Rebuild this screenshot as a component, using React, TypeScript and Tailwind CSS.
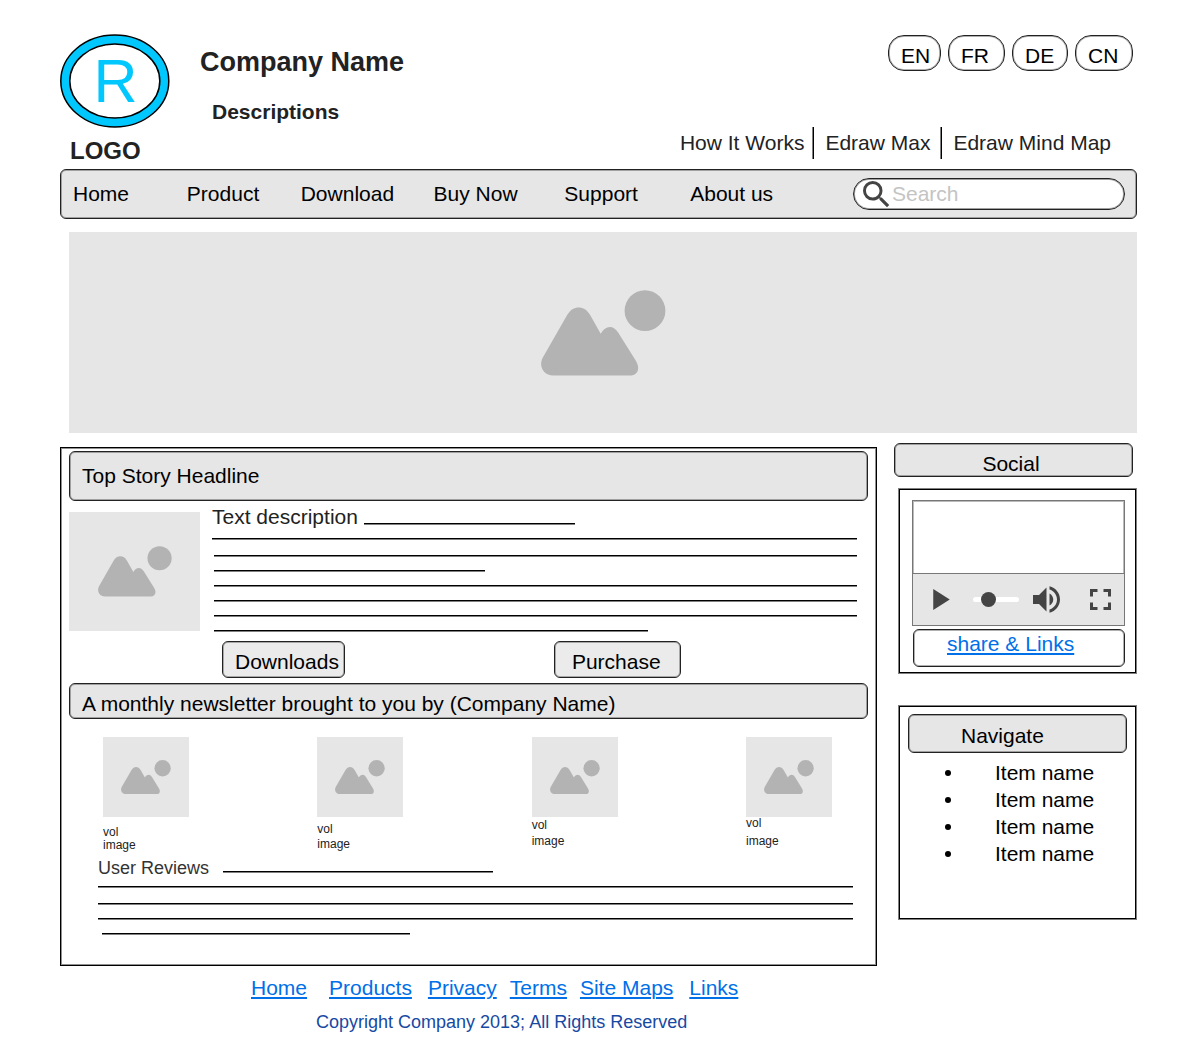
import React from "react";

const bar =
  "rounded-md border border-[#222] bg-[#e6e6e6] shadow-[inset_0_0_0_1px_#a0a0a0] text-black";
const link = "text-[#0070e8] underline decoration-2 underline-offset-2";

function Line({ className = "" }: { className?: string }) {
  return <div className={`h-0.5 border-t border-b border-t-black border-b-[#808080] ${className}`} />;
}

function Mountains({ className = "" }: { className?: string }) {
  return (
    <svg viewBox="0 0 125 86" className={className} fill="#b3b3b3" aria-hidden="true">
      <path d="M1.7 67.8 L26.3 24.8 C32 15 43.5 15 49 24.8 L59.7 43.8 C64.5 35 72.5 35 77.3 42.8 L94.7 70.5 C100 79 96 85.5 89 85.5 L12.3 85.5 C2 85.5 -2.5 76 1.7 67.8 Z" />
      <circle cx="104" cy="20.7" r="20.4" />
    </svg>
  );
}

function Placeholder({ className, icon }: { className: string; icon: string }) {
  return (
    <div role="img" aria-label="Image placeholder" className={`flex items-center justify-center bg-[#e6e6e6] ${className}`}>
      <Mountains className={icon} />
    </div>
  );
}

const languages = [
  { code: "EN", width: "w-[53px]" },
  { code: "FR", width: "w-[57px]" },
  { code: "DE", width: "w-[56px]" },
  { code: "CN", width: "w-[58px]" },
];

const menu = ["Home", "Product", "Download", "Buy Now", "Support", "About us"];

const captions = [
  "mt-[9px] leading-[13px]",
  "mt-[5px] leading-[15px]",
  "leading-[16px]",
  "-mt-[3px] leading-[18px]",
];

const footerLinks = [
  { name: "Home", gap: "mr-[22px]" },
  { name: "Products", gap: "mr-4" },
  { name: "Privacy", gap: "mr-[13px]" },
  { name: "Terms", gap: "mr-[13px]" },
  { name: "Site Maps", gap: "mr-4" },
  { name: "Links", gap: "" },
];

function Header() {
  return (
    <header className="flex justify-between text-[#222]">
      <div className="flex">
        <div className="w-[110px]">
          <svg viewBox="0 0 110 94" className="h-[94px] w-[110px]" role="img" aria-label="Logo">
            <ellipse cx="54.8" cy="47" rx="54" ry="46" fill="#00c8ff" stroke="#000" strokeWidth="1.5" />
            <ellipse cx="54.8" cy="47" rx="45" ry="37" fill="#fff" stroke="#000" strokeWidth="1.5" />
            <text x="55.5" y="68" textAnchor="middle" fontSize="61" fill="#00c8ff">R</text>
          </svg>
          <p className="mt-[7px] mb-0.5 pl-2.5 text-[24px] leading-8 font-bold">LOGO</p>
        </div>
        <div className="ml-[30px] pt-3">
          <h1 className="text-[27px] leading-8 font-bold">Company Name</h1>
          <p className="mt-[22px] ml-3 leading-6 font-bold">Descriptions</p>
        </div>
      </div>
      <div className="flex flex-col items-end justify-between pt-px pb-2.5">
        <div className="flex gap-[7px] pr-1">
          {languages.map((l) => (
            <button
              key={l.code}
              className={`rounded-2xl border border-[#222] pt-2 pb-0.5 pl-3 text-left leading-6 text-black shadow-[inset_0_0_0_1px_#b0b0b0] ${l.width}`}
            >
              {l.code}
            </button>
          ))}
        </div>
        <nav className="flex pr-[26px] leading-8">
          <a href="#how" className="pr-[9px]">How It Works</a>
          <a href="#max" className="border-l border-black px-[11px] shadow-[-1px_0_0_#808080]">Edraw Max</a>
          <a href="#mind" className="border-l border-black pl-[11px] shadow-[-1px_0_0_#808080]">Edraw Mind Map</a>
        </nav>
      </div>
    </header>
  );
}

function MenuBar() {
  return (
    <div className={`flex items-center py-2 pr-[11px] pl-3 ${bar}`}>
      <nav className="grid flex-1 grid-cols-[114fr_114fr_133fr_131fr_126fr_163fr]">
        {menu.map((m) => (
          <a key={m} href="#menu" className="leading-6 whitespace-nowrap">{m}</a>
        ))}
      </nav>
      <label className="flex h-8 w-[272px] items-center rounded-full border border-[#222] bg-white pl-[9px] shadow-[inset_0_0_0_1px_#a0a0a0]">
        <svg viewBox="3 3 18 18" className="size-[27px] shrink-0" fill="#444" aria-hidden="true">
          <path d="M15.5 14h-.79l-.28-.27A6.471 6.471 0 0 0 16 9.500 6.500 6.500 0 1 0 9.500 16c1.610 0 3.090-.59 4.230-1.570l.27.28v.79l5 4.990L20.490 19l-4.990-5zm-6 0C7.010 14 5 11.990 5 9.500S7.010 5 9.500 5 14 7.010 14 9.500 11.990 14 9.500 14z" />
        </svg>
        <input
          type="search"
          aria-label="Search"
          placeholder="Search"
          className="ml-0.5 min-w-0 flex-1 bg-transparent leading-6 outline-none placeholder:text-[#c4c4c4]"
        />
      </label>
    </div>
  );
}

function Story() {
  return (
    <main className="mt-1 border border-black px-2 pt-[3px] pb-[30px] shadow-[inset_0_0_0_1px_#909090]">
      <h2 className={`py-3 pl-3 leading-6 ${bar}`}>Top Story Headline</h2>
      <section className="flex items-start">
        <Placeholder className="mt-[11px] h-[119px] w-[131px] shrink-0" icon="w-[74px]" />
        <div className="mt-1 min-w-0 flex-1 pr-[11px] pl-3">
          <div className="flex items-end leading-6 text-[#222]">
            <span>Text description</span>
            <Line className="mb-1 ml-1.5 w-[211px]" />
          </div>
          <Line className="mt-[9px]" />
          <div className="mt-[15px] ml-0.5 flex flex-col gap-[13px]">
            <Line />
            <Line className="w-[271px]" />
            <Line />
            <Line />
            <Line />
            <Line className="w-[434px]" />
          </div>
          <div className="mt-[9px] ml-2.5 flex gap-[209px]">
            <button className="rounded-md border border-[#222] bg-[#ebebeb] pt-2 pr-[5px] pb-[3px] pl-3 leading-6 text-black shadow-[inset_0_0_0_1px_#a8a8a8]">
              Downloads
            </button>
            <button className="rounded-md border border-[#222] bg-[#ebebeb] pt-2 pr-[19px] pb-[3px] pl-[17px] leading-6 text-black shadow-[inset_0_0_0_1px_#a8a8a8]">
              Purchase
            </button>
          </div>
        </div>
      </section>
      <h2 className={`mt-[5px] pt-2 pb-0.5 pl-3 leading-6 ${bar}`}>
        A monthly newsletter brought to you by (Company Name)
      </h2>
      <section className="mt-[18px] flex items-start justify-between pr-9 pl-[34px]">
        {captions.map((c) => (
          <figure key={c} className="w-[86px]">
            <Placeholder className="h-20" icon="w-[50px]" />
            <figcaption className={`text-[12px] text-[#222] ${c}`}>
              vol
              <br />
              image
            </figcaption>
          </figure>
        ))}
      </section>
      <section className="mt-1.5 pr-[15px] pl-[29px]">
        <div className="flex items-end text-[18px] leading-5 text-[#333]">
          <h3>User Reviews</h3>
          <Line className="mb-[5px] ml-3.5 w-[270px]" />
        </div>
        <Line className="mt-2" />
        <Line className="mt-[15px]" />
        <Line className="mt-[13px]" />
        <Line className="mt-[13px] ml-1 w-[308px]" />
      </section>
    </main>
  );
}

function Player() {
  return (
    <div className="border border-[#777] shadow-[inset_0_0_0_1px_#bbb]">
      <div className="h-[73px] border-b border-[#777]" />
      <div className="flex h-[51px] items-center bg-[#e6e6e6] pr-[13px] pl-5 text-[#444]">
        <button aria-label="Play">
          <svg viewBox="8 5 11 14" className="h-[21px] w-[17px]" fill="currentColor">
            <path d="M8 5v14l11-7z" />
          </svg>
        </button>
        <input
          type="range"
          aria-label="Position"
          defaultValue={26}
          className="ml-[23px] h-[5px] w-[46px] appearance-none rounded-full bg-white [&::-webkit-slider-thumb]:size-[15px] [&::-webkit-slider-thumb]:appearance-none [&::-webkit-slider-thumb]:rounded-full [&::-webkit-slider-thumb]:bg-[#444]"
        />
        <button aria-label="Volume" className="ml-3.5">
          <svg viewBox="3 3 18 18" className="size-[27px]" fill="currentColor">
            <path d="M3 9v6h4l5 5V4L7 9H3zm13.500 3c0-1.770-1.020-3.290-2.500-4.030v8.050c1.480-.73 2.500-2.250 2.500-4.020zM14 3.230v2.060c2.890.86 5 3.540 5 6.710s-2.110 5.850-5 6.710v2.060c4.010-.91 7-4.490 7-8.770s-2.990-7.860-7-8.770z" />
          </svg>
        </button>
        <button aria-label="Full screen" className="ml-auto">
          <svg viewBox="5 5 14 14" className="size-[21px]" fill="currentColor">
            <path d="M7 14H5v5h5v-2H7v-3zm-2-4h2V7h3V5H5v5zm12 7h-3v2h5v-5h-2v3zM14 5v2h3v3h2V5h-5z" />
          </svg>
        </button>
      </div>
    </div>
  );
}

function Sidebar() {
  return (
    <aside className="w-[243px] shrink-0">
      <h2 className={`mr-1 pt-2 pr-[5px] text-center leading-6 ${bar}`}>Social</h2>
      <section className="mt-[11px] ml-1 border border-[#808080] pt-[11px] pr-[11px] pb-1.5 pl-[13px] shadow-[inset_0_0_0_1px_#000]">
        <Player />
        <div className="mt-[3px] ml-px rounded-md border border-[#222] pt-0.5 pb-2.5 pl-[33px] leading-6 shadow-[inset_0_0_0_1px_#b0b0b0]">
          <a href="#share" className={link}>share &amp; Links</a>
        </div>
      </section>
      <section className="mt-[31px] ml-1 border border-[#808080] px-[9px] pt-2 pb-[52px] shadow-[inset_0_0_0_1px_#000]">
        <h2 className={`pt-[9px] pb-1 pl-[52px] leading-6 ${bar}`}>Navigate</h2>
        <ul className="mt-1.5 pl-[37px] leading-[27px] text-black">
          {[1, 2, 3, 4].map((i) => (
            <li key={i} className="flex items-center gap-11">
              <span className="size-1.5 rounded-full bg-black" />
              Item name
            </li>
          ))}
        </ul>
      </section>
    </aside>
  );
}

export default function App() {
  return (
    <div className="min-h-screen bg-white px-[60px] pt-[34px] pb-[14px] font-['Liberation_Sans',Arial,sans-serif] text-[21px] leading-6">
      <Header />
      <MenuBar />
      <Placeholder className="mt-[13px] ml-[9px] h-[201px]" icon="w-[125px]" />
      <div className="mt-2.5 flex items-start gap-[17px]">
        <div className="min-w-0 flex-1">
          <Story />
          <footer className="mt-2.5 pl-[191px]">
            <nav className="flex leading-6">
              {footerLinks.map((f) => (
                <a key={f.name} href="#footer" className={`${link} ${f.gap}`}>{f.name}</a>
              ))}
            </nav>
            <p className="mt-3 pl-[65px] text-[18px] leading-5 text-[#1749a3]">
              Copyright Company 2013; All Rights Reserved
            </p>
          </footer>
        </div>
        <Sidebar />
      </div>
    </div>
  );
}
